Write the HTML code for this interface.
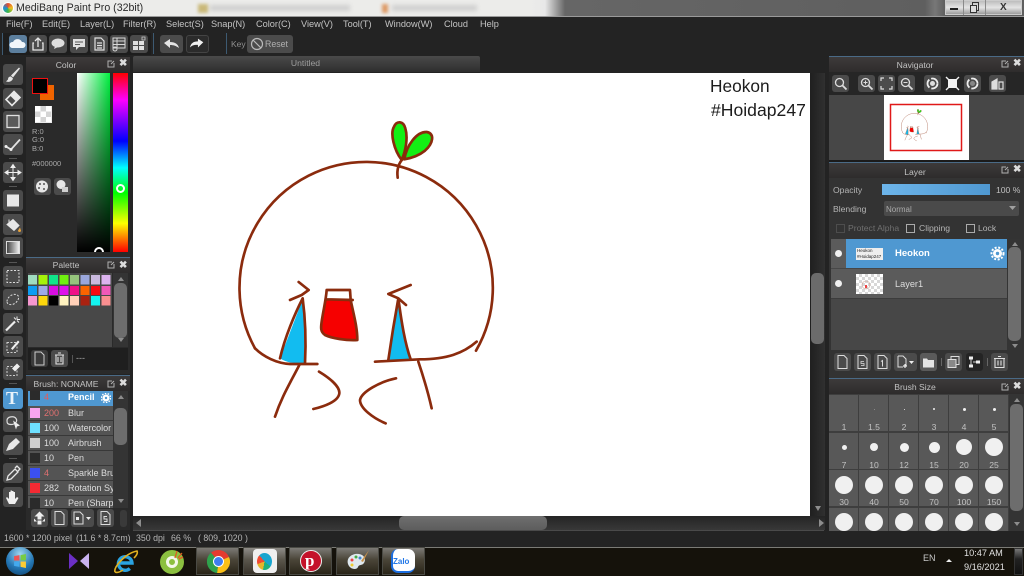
<!DOCTYPE html>
<html><head><meta charset="utf-8"><title>MediBang Paint Pro</title>
<style>
html,body{margin:0;padding:0;width:1024px;height:576px;overflow:hidden;background:#222}
#r{position:relative;width:1024px;height:576px;overflow:hidden;font-family:"Liberation Sans",sans-serif;color:#bdbdbd;filter:blur(.35px)}
#r div,#r span,#r svg{position:absolute}
.t{white-space:nowrap;font-size:9px;line-height:11px}
.m{top:19px;font-size:9.2px;color:#c4c4c4;white-space:nowrap;line-height:11px}
.b{background:#4b4b4b;border-radius:3px}
.b svg{left:0;top:0;width:100%;height:100%}
.h{background:linear-gradient(#3d3a3a,#2e2c2c);height:15px}
.p{background:#2a2a2a}
.c{text-align:center;font-size:8.6px;color:#c2c2c2;line-height:11px;white-space:nowrap}
.row{left:28px;width:85px;height:14px;background:#545454;border-bottom:1px solid #383838;overflow:hidden}
.cell{width:29px;height:36px;background:#585858}
.d{background:#f0f0f0;border-radius:50%}
.sc{background:#343434}
.th{background:#6d6d6d;border-radius:5px}
.task{top:547px;height:28px;background:linear-gradient(#7c7a76,#4a4538 45%,#2a2519);border:1px solid #4a4a44;box-sizing:border-box;width:43px}
</style></head><body><div id="r">

<svg width="0" height="0" style="left:0;top:0"><defs>
<g id="art" fill="none" stroke="#8b2b0d" stroke-width="8" stroke-linecap="round" stroke-linejoin="round">
<path d="M318 570L392 570C400 610 412 650 412 690C380 692 335 685 315 675C300 665 303 650 305 635C310 610 315 590 318 570Z" fill="#f60000" stroke="none"/>
<path d="M320 540L390 540L392 570C400 610 412 650 412 690C380 692 335 685 315 675C300 665 303 650 305 635C310 600 318 570 320 540ZM318 568L398 570"/>
<path d="M248 568L180 745C200 758 230 762 255 760C260 700 258 640 248 568Z" fill="#12bcf0" stroke="none"/>
<path d="M180 745C195 680 225 610 248 565C258 640 258 700 255 760M236 516L266 540L245 555L210 570"/>
<path d="M535 565L505 750L572 748C555 700 545 640 535 565Z" fill="#12bcf0" stroke="none"/>
<path d="M505 750C515 680 525 620 535 565C545 640 555 700 572 748M572 525L505 552L535 565L558 585"/>
<path d="M105 715A380 378 0 1 1 768 722"/>
<path d="M105 715C130 740 170 760 210 762L292 762M465 755L600 748C680 748 730 730 770 695"/>
<path d="M238 765C210 820 185 860 165 920M595 755C610 800 625 850 635 895"/>
<path d="M297 785C330 805 360 830 358 850C355 875 310 890 280 897M528 805C480 815 425 845 420 870C420 895 460 925 497 940"/>
<path d="M545 150C522 120 510 70 522 50C530 32 550 32 556 55C565 85 556 125 545 150Z" fill="#14ef14"/>
<path d="M553 148C560 105 590 65 620 66C645 70 640 100 615 122C595 138 570 145 553 148Z" fill="#14ef14"/>
<path d="M533 203C530 180 535 160 550 145"/>
</g></defs></svg>

<!-- title bar -->
<div style="left:0;top:0;width:1024px;height:16px;background:linear-gradient(90deg,#ececea 0,#ececea 530px,#e8e8e8 545px,#666 565px,#5f5f5f 925px,#777 935px,#5f5f5f 945px)"></div>
<div style="left:210px;top:5px;width:140px;height:6px;background:#cfcfcf;filter:blur(2px)"></div>
<div style="left:198px;top:4px;width:10px;height:9px;background:#c9b878;filter:blur(1.5px)"></div>
<div style="left:392px;top:5px;width:85px;height:6px;background:#cfcfcf;filter:blur(2px)"></div>
<div style="left:382px;top:4px;width:6px;height:9px;background:#dd9a66;filter:blur(1.5px)"></div>
<div style="left:2px;top:2px;width:12px;height:12px;border-radius:50%;background:conic-gradient(#e34a2f,#f0c020,#3bb54a,#1d8fd8,#e34a2f);border:1px solid #fff;box-sizing:border-box"></div>
<div class="t" style="left:16px;top:2px;font-size:10.6px;line-height:13px;color:#2a2a2a">MediBang Paint Pro (32bit)</div>
<div style="left:945px;top:0;width:77px;height:15px;background:linear-gradient(#bdbdbd,#e4e4e4 50%,#9d9d9d);border:1px solid #ccc;box-sizing:border-box"></div>
<div style="left:963px;top:0;width:1px;height:15px;background:#8a8a8a"></div>
<div style="left:985px;top:0;width:1px;height:15px;background:#8a8a8a"></div>
<div style="left:950px;top:8px;width:8px;height:2px;background:#222"></div>
<div style="left:972px;top:2px;width:5px;height:7px;border:1px solid #333"></div>
<div style="left:970px;top:5px;width:5px;height:6px;border:1px solid #333;background:#ddd"></div>
<div class="t" style="left:1000px;top:2px;font-size:10px;font-weight:bold;color:#333">X</div>
<div style="left:0;top:16px;width:1024px;height:1px;background:#9a9a9a"></div>

<!-- menu -->
<div style="left:0;top:17px;width:1024px;height:514px;background:#232323"></div>
<span class="m" style="left:6px">File(F)</span><span class="m" style="left:42px">Edit(E)</span><span class="m" style="left:80px">Layer(L)</span><span class="m" style="left:123px">Filter(R)</span><span class="m" style="left:166px">Select(S)</span><span class="m" style="left:211px">Snap(N)</span><span class="m" style="left:256px">Color(C)</span><span class="m" style="left:301px">View(V)</span><span class="m" style="left:343px">Tool(T)</span><span class="m" style="left:385px">Window(W)</span><span class="m" style="left:444px">Cloud</span><span class="m" style="left:480px">Help</span>

<!-- toolbar -->
<div style="left:2px;top:33px;width:148px;height:22px;background:#1d1d1d;border-left:1px solid #3d5a72"></div>
<div style="left:153px;top:33px;width:1px;height:21px;background:#3d5a72"></div>
<div style="left:226px;top:33px;width:1px;height:21px;background:#3d5a72"></div>
<div class="b" style="left:9px;top:35px;width:18px;height:18px;background:#5c7f9e"><svg viewBox="0 0 18 18"><path d="M3 13a3 3 0 0 1 1-6 5 5 0 0 1 9 0 3 3 0 0 1 1 6z" fill="#f2f6fa"/></svg></div>
<div class="b" style="left:29px;top:35px;width:18px;height:18px"><svg viewBox="0 0 18 18"><path d="M9 12V4M6 6l3-3 3 3M5 8H4v7h10V8h-1" fill="none" stroke="#e6e6e6" stroke-width="1.3"/></svg></div>
<div class="b" style="left:49px;top:35px;width:18px;height:18px"><svg viewBox="0 0 18 18"><ellipse cx="9" cy="8" rx="6.5" ry="4.5" fill="#dedede"/><path d="M6 11l-1 3 4-2z" fill="#dedede"/></svg></div>
<div class="b" style="left:70px;top:35px;width:18px;height:18px"><svg viewBox="0 0 18 18"><path d="M3 4h12v8H9l-3 3v-3H3z" fill="#e0e0e0"/><path d="M5 7h8M5 9.500h5" stroke="#555" stroke-width="1"/></svg></div>
<div class="b" style="left:90px;top:35px;width:18px;height:18px"><svg viewBox="0 0 18 18"><path d="M5 3h6l3 3v9H5zM7 8h5M7 10.500h5M7 13h5" fill="none" stroke="#e0e0e0" stroke-width="1.2"/></svg></div>
<div class="b" style="left:110px;top:35px;width:18px;height:18px"><svg viewBox="0 0 18 18"><path d="M3 3h12v10H3zM3 6h12M3 9.500h12M7 3v10" fill="none" stroke="#d8d8d8" stroke-width="1"/><circle cx="5" cy="14" r="2" fill="none" stroke="#d8d8d8"/></svg></div>
<div class="b" style="left:130px;top:35px;width:18px;height:18px"><svg viewBox="0 0 18 18"><path d="M3 6h5v4H3zM9 6h5v4H9zM3 11h5v4H3zM9 11h5v4H9z" fill="#e0e0e0"/><path d="M12 2h3v3h-3z" fill="none" stroke="#ccc" stroke-width=".8"/></svg></div>
<div class="b" style="left:160px;top:35px;width:23px;height:18px"><svg viewBox="0 0 23 18"><path d="M4 8l6-4v3c5 0 8 2 9 6-3-2-5-3-9-3v3z" fill="#e4e4e4"/></svg></div>
<div class="b" style="left:186px;top:35px;width:23px;height:18px;background:#2b2b2b;border:1px solid #444;box-sizing:border-box"><svg viewBox="0 0 23 18"><path d="M18 7l-6-4v3C7 6 4 8 3 13c3-3 5-3 9-3v3z" fill="#f0f0f0"/></svg></div>
<span class="t" style="left:231px;top:39px;font-size:8.500px;color:#8f8f8f">Key</span>
<div class="b" style="left:247px;top:35px;width:46px;height:18px"><svg viewBox="0 0 46 18"><circle cx="10" cy="9" r="5.500" fill="none" stroke="#bbb" stroke-width="1.2"/><path d="M6 5l8 8" stroke="#bbb" stroke-width="1.2"/></svg><span class="t" style="left:18px;top:4px;font-size:8.800px;color:#b0b0b0">Reset</span></div>

<!-- left tool column -->
<div class="b" style="left:3px;top:64px;width:20px;height:21px"><svg viewBox="0 0 20 20"><path d="M16 3L8 11l2 2 7-9zM8 12c-2 0-3 1-3 3l-2 2c3 1 6 0 7-3z" fill="#e4e4e4"/></svg></div>
<div class="b" style="left:3px;top:88px;width:20px;height:21px"><svg viewBox="0 0 20 20"><path d="M11 3l6 6-8 8-6-6z" fill="none" stroke="#e8e8e8" stroke-width="1.600"/><path d="M11 3l6 6-4 4-6-6z" fill="#e8e8e8"/></svg></div>
<div class="b" style="left:3px;top:111px;width:20px;height:21px"><svg viewBox="0 0 20 20"><rect x="4" y="4" width="12" height="12" fill="#5a5a5a" stroke="#e0e0e0" stroke-width="1.3"/></svg></div>
<div class="b" style="left:3px;top:134px;width:20px;height:21px"><svg viewBox="0 0 20 20"><path d="M3 12l5 3 9-10" fill="none" stroke="#e2e2e2" stroke-width="1.8"/><circle cx="3" cy="12" r="1.500" fill="#eee"/><circle cx="8" cy="15" r="1.500" fill="#eee"/></svg></div>
<div style="left:9px;top:158px;width:8px;height:1px;background:#555"></div>
<div class="b" style="left:3px;top:162px;width:20px;height:21px"><svg viewBox="0 0 20 20"><path d="M10 3v14M3 10h14M10 2l-2 3h4zM10 18l-2-3h4zM2 10l3-2v4zM18 10l-3-2v4z" fill="#eee" stroke="#eee" stroke-width="1"/></svg></div>
<div style="left:9px;top:186px;width:8px;height:1px;background:#555"></div>
<div class="b" style="left:3px;top:190px;width:20px;height:21px"><svg viewBox="0 0 20 20"><rect x="4" y="4" width="12" height="12" fill="#e8e8e8"/></svg></div>
<div class="b" style="left:3px;top:214px;width:20px;height:21px"><svg viewBox="0 0 20 20"><path d="M4 10l6-5 6 6-5 5zM6 9V5" fill="#e6e6e6" stroke="#e6e6e6"/><path d="M17 13l1 3a1 1 0 0 1-3 0z" fill="#e8a23a"/></svg></div>
<div class="b" style="left:3px;top:237px;width:20px;height:21px"><div style="left:3px;top:4px;width:14px;height:13px;background:linear-gradient(90deg,#444,#eee);border:1px solid #ddd;box-sizing:border-box"></div></div>
<div style="left:9px;top:262px;width:8px;height:1px;background:#555"></div>
<div class="b" style="left:3px;top:266px;width:20px;height:21px"><svg viewBox="0 0 20 20"><rect x="4" y="4" width="12" height="12" fill="none" stroke="#ddd" stroke-dasharray="2 1.500"/></svg></div>
<div class="b" style="left:3px;top:289px;width:20px;height:21px"><svg viewBox="0 0 20 20"><path d="M4 12c0-4 5-8 9-7s3 5 0 8-9 3-9-1z" fill="none" stroke="#ddd" stroke-dasharray="2 1.500"/></svg></div>
<div class="b" style="left:3px;top:313px;width:20px;height:21px"><svg viewBox="0 0 20 20"><path d="M3 17l9-9" stroke="#eee" stroke-width="2.200"/><path d="M14 3v3M17 6h-3M16 9l-2-2M11 4l2 2" stroke="#eee"/></svg></div>
<div class="b" style="left:3px;top:336px;width:20px;height:21px"><svg viewBox="0 0 20 20"><rect x="4" y="6" width="10" height="10" fill="none" stroke="#ccc" stroke-dasharray="2 1.500"/><path d="M8 12l7-8 1.500 1.500-7 8z" fill="#eee"/></svg></div>
<div class="b" style="left:3px;top:359px;width:20px;height:21px"><svg viewBox="0 0 20 20"><rect x="4" y="7" width="10" height="9" fill="none" stroke="#ccc" stroke-dasharray="2 1.500"/><path d="M9 9l5-5 3 3-5 5z" fill="#eee"/></svg></div>
<div style="left:9px;top:383px;width:8px;height:1px;background:#555"></div>
<div class="b" style="left:3px;top:388px;width:20px;height:21px;background:#4f98d1"><span class="t" style="left:3px;top:1px;font:bold 18px/19px 'Liberation Serif',serif;color:#eaf3fa">T</span></div>
<div class="b" style="left:3px;top:411px;width:20px;height:21px"><svg viewBox="0 0 20 20"><path d="M4 9c0-4 7-5 9-2s-1 6-5 6-4-2-4-4z" fill="none" stroke="#ddd" stroke-width="1.200"/><path d="M10 9l7 5-3 1-1 3z" fill="#eee"/></svg></div>
<div class="b" style="left:3px;top:435px;width:20px;height:20px"><svg viewBox="0 0 20 20"><path d="M3 16l3-7 7-6 4 4-7 7z" fill="#e8e8e8"/></svg></div>
<div style="left:9px;top:458px;width:8px;height:1px;background:#555"></div>
<div class="b" style="left:3px;top:463px;width:20px;height:20px"><svg viewBox="0 0 20 20"><path d="M4 17l1-4 7-7 3 3-7 7zM12 5l2-2 3 3-2 2" fill="none" stroke="#e6e6e6" stroke-width="1.300"/></svg></div>
<div class="b" style="left:3px;top:487px;width:20px;height:20px"><svg viewBox="0 0 20 20"><path d="M6 17l-3-6 1-1 2 2V5h1.500v5V3.500H9V10V4h1.500v6V5H12v7l2-2 1.500 1L12 17z" fill="#eee"/></svg></div>

<!-- color panel -->
<div class="p" style="left:26px;top:57px;width:104px;height:200px"></div>
<div class="h" style="left:26px;top:57px;width:104px"></div>
<div class="c" style="left:26px;top:60px;width:80px">Color</div>
<svg style="left:107px;top:60px" width="8" height="8" viewBox="0 0 8 8"><path d="M5 1H1v6h6V3M4 4l3-3" fill="none" stroke="#b0b0b0"/></svg>
<span class="t" style="left:119px;top:58px;font-weight:bold;font-size:10px;color:#ddd">✖</span>
<div style="left:40px;top:85px;width:14px;height:15px;background:#f06400"></div>
<div style="left:32px;top:78px;width:16px;height:16px;background:#000;border:1px solid #e11;box-sizing:border-box;outline:0"></div>
<div style="left:35px;top:106px;width:17px;height:17px;background:conic-gradient(#d4d4d4 25%,#fff 0 50%,#d4d4d4 0 75%,#fff 0) 0 0/11px 11px"></div>
<span class="t" style="left:32px;top:128px;font-size:7.500px;line-height:8.300px;color:#a9a9a9">R:0<br>G:0<br>B:0</span>
<span class="t" style="left:32px;top:158px;font-size:7.500px;color:#a9a9a9">#000000</span>
<div class="b" style="left:34px;top:178px;width:17px;height:17px"><svg viewBox="0 0 17 17"><circle cx="8" cy="8.500" r="6" fill="#e6e6e6"/><circle cx="6" cy="6" r="1" fill="#555"/><circle cx="10" cy="6" r="1" fill="#555"/><circle cx="5" cy="10" r="1" fill="#555"/><circle cx="10" cy="11" r="1" fill="#555"/></svg></div>
<div class="b" style="left:54px;top:178px;width:17px;height:17px"><svg viewBox="0 0 17 17"><circle cx="7" cy="6.500" r="4.500" fill="#e6e6e6"/><rect x="8" y="9" width="6" height="5" fill="#cfcfcf"/></svg></div>
<div style="left:77px;top:73px;width:33px;height:179px;background:linear-gradient(to top,#000,rgba(0,0,0,0)),linear-gradient(to right,#fff,#00f040)"></div>
<div style="left:113px;top:73px;width:15px;height:179px;background:linear-gradient(#f00 0,#f0f 15%,#00f 38%,#0ff 53%,#0f0 67%,#ff0 84%,#f00 100%)"></div>
<div style="left:116px;top:184px;width:9px;height:9px;border:2px solid #fff;border-radius:50%;box-sizing:border-box"></div>
<div style="left:94px;top:247px;width:10px;height:5px;overflow:hidden"><div style="left:0;top:0;width:10px;height:10px;border:2px solid #fff;border-radius:50%;box-sizing:border-box"></div></div>

<!-- palette panel -->
<div style="left:26px;top:257px;width:104px;height:1px;background:#4a6a86"></div>
<div class="p" style="left:26px;top:258px;width:104px;height:116px"></div>
<div class="h" style="left:26px;top:258px;width:104px"></div>
<div class="c" style="left:26px;top:260px;width:80px">Palette</div>
<svg style="left:107px;top:261px" width="8" height="8" viewBox="0 0 8 8"><path d="M5 1H1v6h6V3M4 4l3-3" fill="none" stroke="#b0b0b0"/></svg>
<span class="t" style="left:119px;top:260px;font-weight:bold;font-size:10px;color:#ddd">✖</span>
<div style="left:28px;top:273px;width:84px;height:74px;background:#484848"></div>
<svg style="left:28px;top:275px" width="85" height="31">
<g>
<rect x="0" y="0" width="9" height="9.500" fill="#9fdcc0"/><rect x="10.500" y="0" width="9" height="9.500" fill="#a6f20a"/><rect x="21" y="0" width="9" height="9.500" fill="#10e58a"/><rect x="31.500" y="0" width="9" height="9.500" fill="#70ef10"/><rect x="42" y="0" width="9" height="9.500" fill="#96c47c"/><rect x="52.500" y="0" width="9" height="9.500" fill="#9aa7dc"/><rect x="63" y="0" width="9" height="9.500" fill="#c9b9de"/><rect x="73.500" y="0" width="9" height="9.500" fill="#dcb3ee"/>
<rect x="0" y="11" width="9" height="9" fill="#0d9cf2"/><rect x="10.500" y="11" width="9" height="9" fill="#9fa8e6"/><rect x="21" y="11" width="9" height="9" fill="#d70ee0"/><rect x="31.500" y="11" width="9" height="9" fill="#dd10ea"/><rect x="42" y="11" width="9" height="9" fill="#ee1188"/><rect x="52.500" y="11" width="9" height="9" fill="#fb6400"/><rect x="63" y="11" width="9" height="9" fill="#f60c12"/><rect x="73.500" y="11" width="9" height="9" fill="#f058b8"/>
<rect x="0" y="21" width="9" height="9.500" fill="#f597cf"/><rect x="10.500" y="21" width="9" height="9.500" fill="#fdd70c"/><rect x="21" y="21" width="9" height="9.500" fill="#000"/><rect x="31.500" y="21" width="9" height="9.500" fill="#fff3c0"/><rect x="42" y="21" width="9" height="9.500" fill="#ffd0b8"/><rect x="52.500" y="21" width="9" height="9.500" fill="#a92210"/><rect x="63" y="21" width="9" height="9.500" fill="#14f4f0"/><rect x="73.500" y="21" width="9" height="9.500" fill="#fa8f90"/>
</g></svg>
<div class="sc" style="left:113px;top:273px;width:15px;height:74px"></div>
<div class="th" style="left:114px;top:283px;width:13px;height:55px"></div>
<svg style="left:117px;top:276px" width="8" height="70"><path d="M1 5l3-4 3 4zM1 62l3 4 3-4z" fill="#8d8d8d"/></svg>
<div style="left:28px;top:348px;width:100px;height:22px;background:#1f1f1f"></div>
<div class="b" style="left:31px;top:350px;width:17px;height:17px;background:#3a3a3a"><svg viewBox="0 0 17 17"><path d="M4 2h6l3 3v10H4z" fill="none" stroke="#ccc"/></svg></div>
<div class="b" style="left:51px;top:350px;width:17px;height:17px"><svg viewBox="0 0 17 17"><path d="M4 5h9M5 5v9h7V5M7 3h3M7 7v5M10 7v5" fill="none" stroke="#e0e0e0" stroke-width="1.100"/></svg></div>
<div style="left:72px;top:355px;width:1px;height:8px;background:#555"></div>
<span class="t" style="left:76px;top:353px;color:#aaa;font-size:9px">---</span>

<!-- brush panel -->
<div style="left:26px;top:375px;width:104px;height:1px;background:#4a6a86"></div>
<div class="p" style="left:26px;top:376px;width:104px;height:154px"></div>
<div class="h" style="left:26px;top:376px;width:104px"></div>
<div class="c" style="left:26px;top:379px;width:80px">Brush: NONAME</div>
<svg style="left:107px;top:380px" width="8" height="8" viewBox="0 0 8 8"><path d="M5 1H1v6h6V3M4 4l3-3" fill="none" stroke="#b0b0b0"/></svg>
<span class="t" style="left:119px;top:378px;font-weight:bold;font-size:10px;color:#ddd">✖</span>

<div class="row" style="top:391px;height:15px;background:#4f98d1;border:0"><div style="left:2px;top:-1px;width:10px;height:10px;background:#2b2b2b"></div><span class="t" style="left:16px;top:1px;color:#e85a5a;font-size:9px">4</span><span class="t" style="left:40px;top:1px;color:#fff;font-weight:bold;font-size:9px">Pencil</span><svg style="left:73px;top:2px" width="10" height="10" viewBox="0 0 10 10"><circle cx="5" cy="5" r="3.500" fill="#fff"/><circle cx="5" cy="5" r="4.600" fill="none" stroke="#fff" stroke-dasharray="1.500 1.400" stroke-width="1.400"/><circle cx="5" cy="5" r="1.200" fill="#4f98d1"/></svg></div>
<div class="row" style="top:406px"><div style="left:2px;top:2px;width:10px;height:10px;background:#f8a6ee"></div><span class="t" style="left:16px;top:2px;color:#e07070">200</span><span class="t" style="left:40px;top:2px;color:#ddd">Blur</span></div>
<div class="row" style="top:421px"><div style="left:2px;top:2px;width:10px;height:10px;background:#6ee0ff"></div><span class="t" style="left:16px;top:2px;color:#ddd">100</span><span class="t" style="left:40px;top:2px;color:#ddd">Watercolor</span></div>
<div class="row" style="top:436px"><div style="left:2px;top:2px;width:10px;height:10px;background:#cfcfcf"></div><span class="t" style="left:16px;top:2px;color:#ddd">100</span><span class="t" style="left:40px;top:2px;color:#ddd">Airbrush</span></div>
<div class="row" style="top:451px"><div style="left:2px;top:2px;width:10px;height:10px;background:#2b2b2b"></div><span class="t" style="left:16px;top:2px;color:#ddd">10</span><span class="t" style="left:40px;top:2px;color:#ddd">Pen</span></div>
<div class="row" style="top:466px"><div style="left:2px;top:2px;width:10px;height:10px;background:#3b50f0"></div><span class="t" style="left:16px;top:2px;color:#e07070">4</span><span class="t" style="left:40px;top:2px;color:#ddd">Sparkle Brush</span></div>
<div class="row" style="top:481px"><div style="left:2px;top:2px;width:10px;height:10px;background:#f52a33"></div><span class="t" style="left:16px;top:2px;color:#ddd">282</span><span class="t" style="left:40px;top:2px;color:#ddd">Rotation Symmetry</span></div>
<div class="row" style="top:496px;height:12px;border:0"><div style="left:2px;top:2px;width:10px;height:10px;background:#2b2b2b"></div><span class="t" style="left:16px;top:2px;color:#ddd">10</span><span class="t" style="left:40px;top:2px;color:#ddd">Pen (Sharp)</span></div>

<div class="sc" style="left:113px;top:391px;width:15px;height:117px"></div>
<div class="th" style="left:114px;top:408px;width:13px;height:37px"></div>
<svg style="left:117px;top:394px" width="8" height="112"><path d="M1 5l3-4 3 4zM1 105l3 4 3-4z" fill="#8d8d8d"/></svg>
<div class="b" style="left:31px;top:509px;width:17px;height:18px"><svg viewBox="0 0 17 17"><path d="M8.500 2l5 5h-3v3h-4V7h-3zM3 9v3h3M14 9v3h-3M6.500 11h4v4h-4z" fill="#eee"/></svg></div>
<div class="b" style="left:51px;top:509px;width:17px;height:18px"><svg viewBox="0 0 17 17"><path d="M4 2h6l3 3v10H4z" fill="none" stroke="#ddd"/></svg></div>
<div class="b" style="left:71px;top:509px;width:23px;height:18px"><svg viewBox="0 0 23 18"><path d="M3 3h6l3 3v9H3z" fill="none" stroke="#ddd"/><rect x="5" y="8" width="3" height="3" fill="#eee"/><path d="M15 8h5l-2.500 3z" fill="#eee"/></svg></div>
<div class="b" style="left:97px;top:509px;width:17px;height:18px"><svg viewBox="0 0 17 17"><path d="M4 2h6l3 3v10H4z" fill="none" stroke="#ddd"/><path d="M10 7H7v2.500h3V12H7" fill="none" stroke="#ddd"/></svg></div>
<div class="b" style="left:120px;top:510px;width:7px;height:17px;background:#3a3a3a"></div>

<!-- canvas area -->
<div style="left:133px;top:56px;width:347px;height:16px;background:linear-gradient(#4a4a4a,#2e2e2e);border-radius:2px 2px 0 0"></div>
<div class="c" style="left:133px;top:58px;width:345px;color:#9e9e9e">Untitled</div>
<div style="left:133px;top:73px;width:677px;height:443px;background:#fff"></div>
<svg style="left:133px;top:73px;overflow:hidden" width="677" height="443" viewBox="133 73 677 443"><use href="#art" transform="translate(220 110) scale(.33333)"/></svg>
<div class="t" style="left:710px;top:76px;font-size:17.300px;line-height:20px;color:#1c1c1c">Heokon</div>
<div class="t" style="left:711px;top:100px;font-size:17.600px;line-height:20px;color:#1c1c1c">#Hoidap247</div>

<!-- canvas scrollbars -->
<div style="left:810px;top:73px;width:15px;height:443px;background:linear-gradient(90deg,#1f1f1f,#303030)"></div>
<div class="th" style="left:811px;top:273px;width:13px;height:71px;background:#6b6b6b"></div>
<svg style="left:814px;top:505px" width="8" height="8"><path d="M1 1h6L4 6z" fill="#8d8d8d"/></svg>
<div style="left:133px;top:516px;width:692px;height:14px;background:linear-gradient(#242424,#383838)"></div>
<div class="th" style="left:399px;top:516px;width:148px;height:14px;background:linear-gradient(#6f6f6f,#5d5d5d)"></div>
<svg style="left:135px;top:519px" width="8" height="8"><path d="M6 0v8L1 4z" fill="#8d8d8d"/></svg>
<svg style="left:817px;top:519px" width="8" height="8"><path d="M2 0v8l5-4z" fill="#8d8d8d"/></svg>
<div style="left:133px;top:530px;width:691px;height:1px;background:#4a4a4a"></div>

<!-- navigator -->
<div style="left:829px;top:56px;width:195px;height:1px;background:#4a6a86"></div>
<div class="h" style="left:829px;top:57px;width:195px"></div>
<div class="c" style="left:829px;top:60px;width:172px">Navigator</div>
<svg style="left:1001px;top:60px" width="8" height="8" viewBox="0 0 8 8"><path d="M5 1H1v6h6V3M4 4l3-3" fill="none" stroke="#b0b0b0"/></svg>
<span class="t" style="left:1013px;top:58px;font-weight:bold;font-size:10px;color:#ddd">✖</span>
<div style="left:829px;top:72px;width:195px;height:23px;background:#262626"></div>
<div class="b" style="left:832px;top:75px;width:17px;height:17px"><svg viewBox="0 0 17 17"><circle cx="7.500" cy="7.500" r="4" fill="none" stroke="#ddd" stroke-width="1.300"/><path d="M10.500 10.500l4 4" stroke="#ddd" stroke-width="1.800"/></svg></div>
<div class="b" style="left:858px;top:75px;width:17px;height:17px"><svg viewBox="0 0 17 17"><circle cx="7.500" cy="7.500" r="4" fill="none" stroke="#ddd" stroke-width="1.300"/><path d="M10.500 10.500l4 4" stroke="#ddd" stroke-width="1.800"/><path d="M5.500 7.500h4M7.500 5.500v4" stroke="#ddd"/></svg></div>
<div class="b" style="left:878px;top:75px;width:17px;height:17px"><svg viewBox="0 0 17 17"><path d="M3 6V3h3M11 3h3v3M14 11v3h-3M6 14H3v-3" fill="none" stroke="#ddd" stroke-width="1.200"/></svg></div>
<div class="b" style="left:898px;top:75px;width:17px;height:17px"><svg viewBox="0 0 17 17"><circle cx="7.500" cy="7.500" r="4" fill="none" stroke="#ddd" stroke-width="1.300"/><path d="M10.500 10.500l4 4" stroke="#ddd" stroke-width="1.800"/><path d="M5.500 7.500h4" stroke="#ddd"/></svg></div>
<div class="b" style="left:924px;top:75px;width:17px;height:17px"><svg viewBox="0 0 17 17"><circle cx="8.500" cy="8.500" r="5" fill="none" stroke="#eee" stroke-width="1.800" stroke-dasharray="9 2"/><circle cx="8.500" cy="8.500" r="2.500" fill="#ddd"/></svg></div>
<div class="b" style="left:944px;top:75px;width:17px;height:17px;background:#252525"><svg viewBox="0 0 17 17"><rect x="4" y="4" width="9" height="9" fill="#f2f2f2"/><path d="M2 2l3 3M15 2l-3 3M2 15l3-3M15 15l-3-3" stroke="#f2f2f2" stroke-width="1.400"/></svg></div>
<div class="b" style="left:964px;top:75px;width:17px;height:17px"><svg viewBox="0 0 17 17"><circle cx="8.500" cy="8.500" r="5" fill="none" stroke="#eee" stroke-width="1.800" stroke-dasharray="9 2"/><circle cx="8.500" cy="8.500" r="2.500" fill="#888"/></svg></div>
<div class="b" style="left:989px;top:75px;width:17px;height:17px"><svg viewBox="0 0 17 17"><path d="M3 14V7l5-3v10zM10 7h4v7h-4z" fill="none" stroke="#ddd" stroke-width="1.200"/><path d="M3 14V7l5-3v10z" fill="#ddd"/></svg></div>
<div style="left:829px;top:95px;width:195px;height:65px;background:#474747"></div>
<div style="left:884px;top:95px;width:85px;height:65px;background:#fff"></div>
<svg style="left:884px;top:95px" width="85" height="65" viewBox="0 0 85 65"><use href="#art" transform="translate(6 9) scale(.105) translate(87 37) scale(.33333)"/><rect x="6.500" y="9.500" width="71" height="46" fill="none" stroke="#e01919" stroke-width="1.500"/></svg>
<div style="left:829px;top:160px;width:195px;height:2px;background:#1b1b1b"></div>

<!-- layer -->
<div style="left:829px;top:162px;width:195px;height:1px;background:#4a6a86"></div>
<div class="p" style="left:829px;top:163px;width:195px;height:215px;background:#333"></div>
<div class="h" style="left:829px;top:163px;width:195px"></div>
<div class="c" style="left:829px;top:167px;width:172px">Layer</div>
<svg style="left:1001px;top:166px" width="8" height="8" viewBox="0 0 8 8"><path d="M5 1H1v6h6V3M4 4l3-3" fill="none" stroke="#b0b0b0"/></svg>
<span class="t" style="left:1013px;top:164px;font-weight:bold;font-size:10px;color:#ddd">✖</span>
<span class="t" style="left:833px;top:185px;font-size:8.600px;color:#b5b5b5">Opacity</span>
<div style="left:882px;top:184px;width:108px;height:11px;background:linear-gradient(90deg,#6db5ea,#4f98d1)"></div>
<span class="t" style="left:996px;top:185px;font-size:8.600px;color:#c0c0c0">100 %</span>
<span class="t" style="left:833px;top:204px;font-size:8.600px;color:#b5b5b5">Blending</span>
<div style="left:884px;top:201px;width:135px;height:15px;background:#4a4a4a;border-radius:2px"></div>
<span class="t" style="left:886px;top:204px;font-size:8px;color:#aaa">Normal</span>
<svg style="left:1009px;top:206px" width="8" height="5"><path d="M0 0h7L3.500 4z" fill="#a0a0a0"/></svg>
<div style="left:836px;top:224px;width:7px;height:7px;border:1px solid #4d4d4d"></div>
<span class="t" style="left:848px;top:223px;font-size:8.600px;color:#6f6f6f">Protect Alpha</span>
<div style="left:906px;top:224px;width:7px;height:7px;border:1px solid #aaa"></div>
<span class="t" style="left:919px;top:223px;font-size:8.600px;color:#b5b5b5">Clipping</span>
<div style="left:966px;top:224px;width:7px;height:7px;border:1px solid #aaa"></div>
<span class="t" style="left:978px;top:223px;font-size:8.600px;color:#b5b5b5">Lock</span>

<div style="left:831px;top:239px;width:176px;height:111px;background:#474747"></div>
<div style="left:831px;top:239px;width:15px;height:29px;background:#5b5b5b"></div>
<div style="left:846px;top:239px;width:161px;height:29px;background:#4f98d1"></div>
<div style="left:831px;top:269px;width:176px;height:29px;background:#5b5b5b"></div>
<div style="left:831px;top:298px;width:176px;height:1px;background:#3c3c3c"></div>
<div class="d" style="left:835px;top:250px;width:7px;height:7px"></div>
<div class="d" style="left:835px;top:280px;width:7px;height:7px"></div>
<div style="left:856px;top:248px;width:27px;height:12px;background:#eee;overflow:hidden"><span class="t" style="left:1px;top:0;font-size:4.500px;line-height:5.500px;color:#222">Heokon<br>#Hoidap247</span></div>
<div style="left:856px;top:274px;width:27px;height:20px;background:conic-gradient(#d8d8d8 25%,#fff 0 50%,#d8d8d8 0 75%,#fff 0) 0 0/6px 6px"></div>
<svg style="left:856px;top:274px" width="27" height="20" viewBox="0 0 27 20"><circle cx="10" cy="11" r="4" fill="none" stroke="#c9a090" stroke-width=".6"/><rect x="9" y="11" width="2" height="3" fill="#e44"/></svg>
<span class="t" style="left:895px;top:248px;font-size:9.500px;font-weight:bold;color:#fff">Heokon</span>
<span class="t" style="left:895px;top:279px;font-size:9.200px;color:#ddd">Layer1</span>
<svg style="left:990px;top:246px" width="15" height="15" viewBox="0 0 15 15"><circle cx="7.500" cy="7.500" r="4.500" fill="#fff"/><circle cx="7.500" cy="7.500" r="6" fill="none" stroke="#fff" stroke-dasharray="2 1.600" stroke-width="2"/><circle cx="7.500" cy="7.500" r="1.700" fill="#4f98d1"/></svg>
<div class="sc" style="left:1007px;top:239px;width:15px;height:111px"></div>
<div class="th" style="left:1008px;top:247px;width:13px;height:94px"></div>
<svg style="left:1011px;top:241px" width="8" height="109"><path d="M1 5l3-4 3 4zM1 103l3 4 3-4z" fill="#8d8d8d"/></svg>

<div class="b" style="left:834px;top:353px;width:17px;height:18px"><svg viewBox="0 0 17 17"><path d="M4 2h6l3 3v10H4z" fill="none" stroke="#ddd"/></svg></div>
<div class="b" style="left:854px;top:353px;width:17px;height:18px"><svg viewBox="0 0 17 17"><path d="M4 2h6l3 3v10H4z" fill="none" stroke="#ddd"/><path d="M10 8H7v2h3v2H7" fill="none" stroke="#ddd" stroke-width=".8"/></svg></div>
<div class="b" style="left:874px;top:353px;width:17px;height:18px"><svg viewBox="0 0 17 17"><path d="M4 2h6l3 3v10H4z" fill="none" stroke="#ddd"/><path d="M7 8l1.500-1v6" fill="none" stroke="#ddd"/></svg></div>
<div class="b" style="left:894px;top:353px;width:23px;height:18px"><svg viewBox="0 0 23 18"><path d="M4 3h5l3 3v7M4 3v11h5" fill="none" stroke="#ddd"/><path d="M9 13h4M11 11v4" stroke="#eee" stroke-width="1.200"/><path d="M15 8h5l-2.500 3z" fill="#eee"/></svg></div>
<div class="b" style="left:920px;top:353px;width:17px;height:18px;background:#5a5a5a"><svg viewBox="0 0 17 17"><path d="M3 5h4l1 1.500h6V14H3z" fill="#e4e4e4"/></svg></div>
<div style="left:941px;top:358px;width:1px;height:8px;background:#666"></div>
<div class="b" style="left:945px;top:353px;width:17px;height:18px"><svg viewBox="0 0 17 17"><rect x="3" y="6" width="8" height="8" fill="#888" stroke="#ddd"/><path d="M6 6V3h8v8h-3" fill="none" stroke="#ddd"/></svg></div>
<div class="b" style="left:966px;top:353px;width:17px;height:18px;background:#242424"><svg viewBox="0 0 17 17"><path d="M3 3h4v3H3zM3 11h4v3H3zM10 7h4v3h-4z" fill="#eee"/><path d="M5 6v5M7 8.500h3" stroke="#ccc"/></svg></div>
<div style="left:987px;top:358px;width:1px;height:8px;background:#666"></div>
<div class="b" style="left:991px;top:353px;width:17px;height:18px"><svg viewBox="0 0 17 17"><path d="M3 5h11M4 5v9h9V5M7 3h3M7 7v5M10 7v5" fill="none" stroke="#e0e0e0" stroke-width="1.100"/></svg></div>

<!-- brush size -->
<div style="left:829px;top:378px;width:195px;height:1px;background:#4a6a86"></div>
<div class="h" style="left:829px;top:379px;width:195px"></div>
<div class="c" style="left:829px;top:382px;width:172px">Brush Size</div>
<svg style="left:1001px;top:383px" width="8" height="8" viewBox="0 0 8 8"><path d="M5 1H1v6h6V3M4 4l3-3" fill="none" stroke="#b0b0b0"/></svg>
<span class="t" style="left:1013px;top:381px;font-weight:bold;font-size:10px;color:#ddd">✖</span>
<div style="left:829px;top:394px;width:180px;height:137px;background:#3e3e3e"></div>
<div class="cell" style="left:829px;top:395px"></div><div class="cell" style="left:859px;top:395px"></div><div class="cell" style="left:889px;top:395px"></div><div class="cell" style="left:919px;top:395px"></div><div class="cell" style="left:949px;top:395px"></div><div class="cell" style="left:979px;top:395px"></div>
<div class="cell" style="left:829px;top:433px"></div><div class="cell" style="left:859px;top:433px"></div><div class="cell" style="left:889px;top:433px"></div><div class="cell" style="left:919px;top:433px"></div><div class="cell" style="left:949px;top:433px"></div><div class="cell" style="left:979px;top:433px"></div>
<div class="cell" style="left:829px;top:470px"></div><div class="cell" style="left:859px;top:470px"></div><div class="cell" style="left:889px;top:470px"></div><div class="cell" style="left:919px;top:470px"></div><div class="cell" style="left:949px;top:470px"></div><div class="cell" style="left:979px;top:470px"></div>
<div class="cell" style="left:829px;top:508px;height:23px"></div><div class="cell" style="left:859px;top:508px;height:23px"></div><div class="cell" style="left:889px;top:508px;height:23px"></div><div class="cell" style="left:919px;top:508px;height:23px"></div><div class="cell" style="left:949px;top:508px;height:23px"></div><div class="cell" style="left:979px;top:508px;height:23px"></div>

<div class="d" style="left:873.500px;top:408.500px;width:1px;height:1px;background:#999"></div>
<div class="d" style="left:903.500px;top:408.500px;width:1px;height:1px"></div>
<div class="d" style="left:933px;top:408px;width:2px;height:2px"></div>
<div class="d" style="left:962.500px;top:407.500px;width:3px;height:3px"></div>
<div class="d" style="left:992.500px;top:407.500px;width:3px;height:3px"></div>
<div class="d" style="left:841.500px;top:444.500px;width:5px;height:5px"></div>
<div class="d" style="left:870px;top:443px;width:8px;height:8px"></div>
<div class="d" style="left:899.500px;top:442.500px;width:9px;height:9px"></div>
<div class="d" style="left:928.500px;top:441.500px;width:11px;height:11px"></div>
<div class="d" style="left:956px;top:439px;width:16px;height:16px"></div>
<div class="d" style="left:985px;top:438px;width:18px;height:18px"></div>
<div class="d" style="left:835px;top:476px;width:18px;height:18px"></div><div class="d" style="left:865px;top:476px;width:18px;height:18px"></div><div class="d" style="left:895px;top:476px;width:18px;height:18px"></div><div class="d" style="left:925px;top:476px;width:18px;height:18px"></div><div class="d" style="left:955px;top:476px;width:18px;height:18px"></div><div class="d" style="left:985px;top:476px;width:18px;height:18px"></div>
<div class="d" style="left:835px;top:513px;width:18px;height:18px"></div><div class="d" style="left:865px;top:513px;width:18px;height:18px"></div><div class="d" style="left:895px;top:513px;width:18px;height:18px"></div><div class="d" style="left:925px;top:513px;width:18px;height:18px"></div><div class="d" style="left:955px;top:513px;width:18px;height:18px"></div><div class="d" style="left:985px;top:513px;width:18px;height:18px"></div>

<span class="c" style="left:829px;top:422px;width:30px">1</span><span class="c" style="left:859px;top:422px;width:30px">1.5</span><span class="c" style="left:889px;top:422px;width:30px">2</span><span class="c" style="left:919px;top:422px;width:30px">3</span><span class="c" style="left:949px;top:422px;width:30px">4</span><span class="c" style="left:979px;top:422px;width:30px">5</span>
<span class="c" style="left:829px;top:460px;width:30px">7</span><span class="c" style="left:859px;top:460px;width:30px">10</span><span class="c" style="left:889px;top:460px;width:30px">12</span><span class="c" style="left:919px;top:460px;width:30px">15</span><span class="c" style="left:949px;top:460px;width:30px">20</span><span class="c" style="left:979px;top:460px;width:30px">25</span>
<span class="c" style="left:829px;top:497px;width:30px">30</span><span class="c" style="left:859px;top:497px;width:30px">40</span><span class="c" style="left:889px;top:497px;width:30px">50</span><span class="c" style="left:919px;top:497px;width:30px">70</span><span class="c" style="left:949px;top:497px;width:30px">100</span><span class="c" style="left:979px;top:497px;width:30px">150</span>

<div class="sc" style="left:1009px;top:394px;width:15px;height:137px"></div>
<div class="th" style="left:1010px;top:404px;width:13px;height:107px"></div>
<svg style="left:1013px;top:397px" width="8" height="132"><path d="M1 5l3-4 3 4zM1 125l3 4 3-4z" fill="#8d8d8d"/></svg>

<!-- status -->
<div style="left:0;top:531px;width:1024px;height:16px;background:#232323"></div>
<span class="t" style="left:4px;top:533px;font-size:8.800px;color:#b5b5b5">1600 * 1200 pixel</span>
<span class="t" style="left:76px;top:533px;font-size:8.800px;color:#b5b5b5">(11.6 * 8.7cm)</span>
<span class="t" style="left:136px;top:533px;font-size:8.800px;color:#b5b5b5">350 dpi</span>
<span class="t" style="left:171px;top:533px;font-size:8.800px;color:#b5b5b5">66 %</span>
<span class="t" style="left:198px;top:533px;font-size:8.800px;color:#b5b5b5">( 809, 1020 )</span>

<!-- taskbar -->
<div style="left:0;top:547px;width:1024px;height:29px;background:radial-gradient(ellipse 70px 20px at 880px 570px,#26321c,transparent),radial-gradient(ellipse 120px 18px at 600px 555px,#2c2a0e,transparent),radial-gradient(ellipse 160px 16px at 480px 570px,#2a1c0c,transparent),#15120b;border-top:1px solid #7b7b76;box-sizing:border-box"></div>
<div style="left:6px;top:547px;width:28px;height:28px;border-radius:50%;background:radial-gradient(circle at 50% 25%,#9fd5ef,#2477b4 55%,#0e3c66)"></div>
<svg style="left:13px;top:554px" width="14" height="14" viewBox="0 0 13 13"><path d="M1 2l5-1v5H1z" fill="#e55"/><path d="M7 1l5-1v6H7z" fill="#7c4"/><path d="M1 7h5v5l-5-1z" fill="#4ae"/><path d="M7 7h5v6l-5-1z" fill="#fc3"/></svg>
<svg style="left:68px;top:550px" width="22" height="22" viewBox="0 0 22 22"><path d="M1 3l9 8-9 8z" fill="#6b2fc4"/><path d="M21 3l-9 8 9 8z" fill="#c9b2ef"/></svg>
<svg style="left:112px;top:548px" width="28" height="27" viewBox="0 0 28 27"><path d="M7 15h13a6.800 6.800 0 1 0-2.200 5.500" fill="none" stroke="#2aa3e2" stroke-width="3.400"/><path d="M3 24c-2-5 11-19 22-21 1 2-1 5-3 7M3 24c2 1 5 0 8-2" fill="none" stroke="#e0b020" stroke-width="1.600"/></svg>
<div style="left:160px;top:550px;width:24px;height:24px;border-radius:50%;background:#8cc040"></div>
<div style="left:166px;top:556px;width:12px;height:12px;border-radius:50%;background:#8cc040;border:3px solid #f4f8ea;box-sizing:border-box"></div>
<svg style="left:172px;top:549px" width="12" height="12" viewBox="0 0 12 12"><path d="M3 9l2-7M6 9l4-5M7 10l4-2" stroke="#e05a20" stroke-width="1.300"/></svg>

<div class="task" style="left:196px"></div><div class="task" style="left:243px;background:linear-gradient(#8e8c88,#5a564c 45%,#38332a)"></div><div class="task" style="left:289px"></div><div class="task" style="left:336px"></div><div class="task" style="left:382px"></div>
<svg style="left:207px;top:550px" width="23" height="23" viewBox="0 0 23 23"><path d="M11.500 11.500L22 7A11.500 11.500 0 0 0 4 2.800z" fill="#e53b2f"/><path d="M11.500 11.500L22 7A11.500 11.500 0 0 1 10 23z" fill="#fbc017"/><path d="M11.500 11.500L10 23A11.500 11.500 0 0 1 4 2.800z" fill="#2fa24c"/></svg>
<div style="left:213px;top:556px;width:11px;height:11px;border-radius:50%;background:#3f7ef0;border:1.500px solid #fff;box-sizing:border-box"></div>
<div style="left:253px;top:549px;width:24px;height:24px;border-radius:4px;background:#efefef"></div>
<div style="left:257px;top:553px;width:15px;height:17px;border-radius:50%;background:conic-gradient(#17a5cf 0 130deg,#1fb07c 0 190deg,#e6b52a 0 250deg,#ef4a33 0 320deg,#17a5cf 0)"></div>
<div style="left:300px;top:550px;width:22px;height:22px;border-radius:50%;background:#c4122a;border:1px solid #eee;box-sizing:border-box"></div>
<span class="t" style="left:305px;top:551px;font:bold 17px/19px 'Liberation Serif',serif;color:#fff">p</span>
<svg style="left:345px;top:548px" width="26" height="26" viewBox="0 0 26 26"><path d="M3 16C1 9 8 5 14 6s7 6 5 9-5 1-6 4-8 3-10-3z" fill="#dfe8ee"/><circle cx="7" cy="12" r="1.500" fill="#e44"/><circle cx="11" cy="9" r="1.500" fill="#4a4"/><circle cx="15" cy="10" r="1.500" fill="#48c"/><circle cx="7" cy="17" r="1.500" fill="#ec3"/><path d="M24 2l-6 12-2-1z" fill="#c9924a"/></svg>
<div style="left:391px;top:549px;width:24px;height:24px;border-radius:7px;background:#fff;border-left:2px solid #1c6ee0;border-bottom:2px solid #1c6ee0;box-sizing:border-box"></div>
<span class="t" style="left:393px;top:556px;font-size:8px;font-weight:bold;color:#2278e8">Zalo</span>

<span class="t" style="left:923px;top:553px;font-size:9px;color:#c8c8c8">EN</span>
<svg style="left:946px;top:558px" width="6" height="5"><path d="M0 4l3-3 3 3z" fill="#eee"/></svg>
<span class="t" style="left:964px;top:548px;font-size:9.200px;color:#e0e0e0">10:47 AM</span>
<span class="t" style="left:964px;top:562px;font-size:9.200px;color:#e0e0e0">9/16/2021</span>
<div style="left:1014px;top:548px;width:9px;height:27px;background:linear-gradient(#777,#222 40%,#111);border:1px solid #333;box-sizing:border-box"></div>
</div></body></html>
